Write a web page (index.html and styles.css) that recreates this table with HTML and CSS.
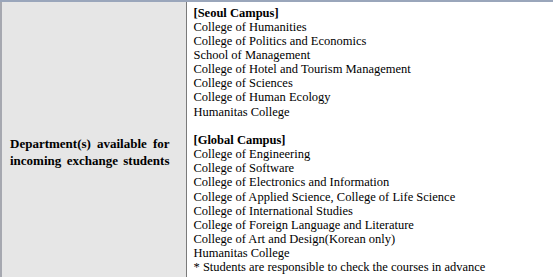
FILE: index.html
```html
<!DOCTYPE html>
<html>
<head>
<meta charset="utf-8">
<link rel="stylesheet" href="styles.css">
</head>
<body>
<table class="info">
  <tr>
    <th class="label"><div class="label-text">Department(s) available for incoming exchange students</div></th>
    <td class="content">
      <div class="head">[Seoul Campus]</div>
      <div>College of Humanities</div>
      <div>College of Politics and Economics</div>
      <div>School of Management</div>
      <div>College of Hotel and Tourism Management</div>
      <div>College of Sciences</div>
      <div>College of Human Ecology</div>
      <div>Humanitas College</div>
      <div class="blank">&nbsp;</div>
      <div class="head">[Global Campus]</div>
      <div>College of Engineering</div>
      <div>College of Software</div>
      <div>College of Electronics and Information</div>
      <div>College of Applied Science, College of Life Science</div>
      <div>College of International Studies</div>
      <div>College of Foreign Language and Literature</div>
      <div>College of Art and Design(Korean only)</div>
      <div>Humanitas College</div>
      <div>* Students are responsible to check the courses in advance</div>
    </td>
  </tr>
</table>
</body>
</html>
```

FILE: styles.css
```css
html, body {
  margin: 0;
  padding: 0;
  background: #ffffff;
  font-family: "Liberation Serif", "Times New Roman", serif;
}
.info {
  border-collapse: collapse;
  width: 553px;
  font-family: "Liberation Serif", "Times New Roman", serif;
  color: #000000;
  border-top: 2px solid #9aa6bb;
  border-left: 2px solid #a6a8b0;
}
.label {
  width: 185px;
  box-sizing: border-box;
  background: #e6e6e6;
  border-right: 1px solid #7a7a7a;
  padding: 0 16px 0 8px;
  vertical-align: middle;
  text-align: left;
}
.label-text {
  font-family: "Liberation Serif", "Times New Roman", serif;
  font-size: 13px;
  font-weight: bold;
  line-height: 17px;
  text-align: justify;
  text-align-last: justify;
  padding-top: 19px;
}
.content {
  padding: 3.5px 0 8px 7px;
  font-family: "Liberation Serif", "Times New Roman", serif;
  font-size: 12.5px;
  line-height: 14.15px;
  vertical-align: top;
}
.head {
  font-weight: bold;
}
```
